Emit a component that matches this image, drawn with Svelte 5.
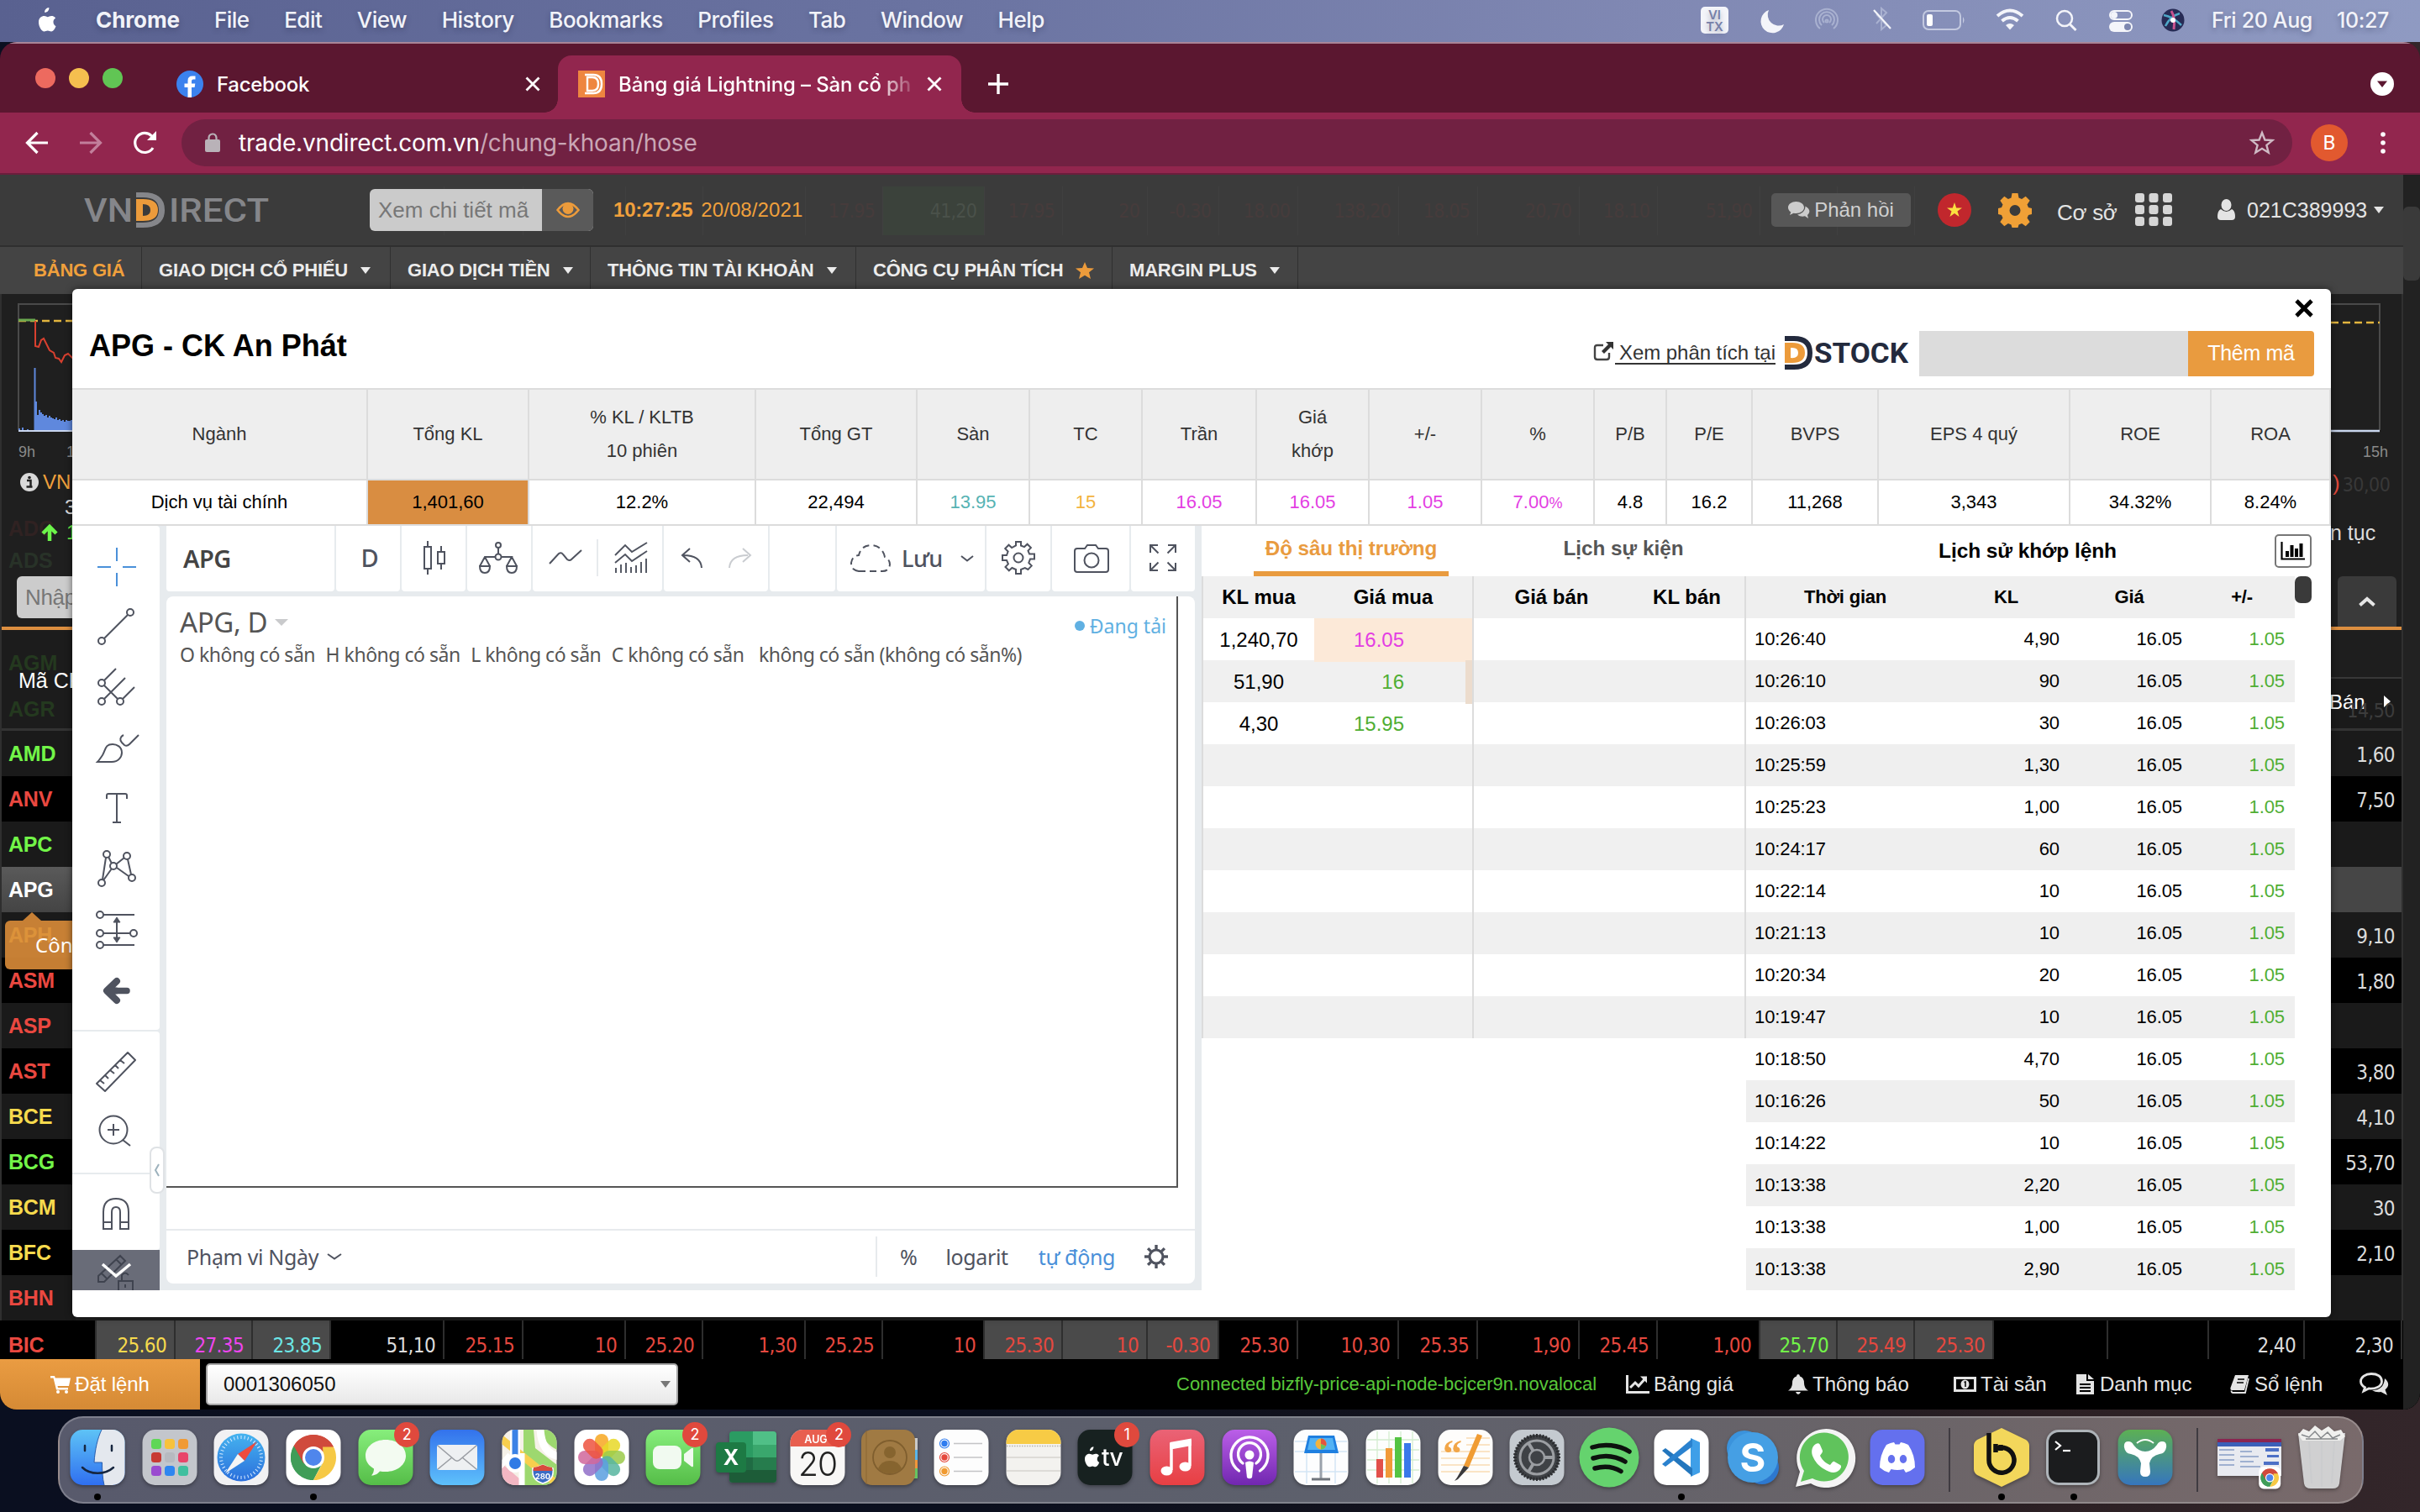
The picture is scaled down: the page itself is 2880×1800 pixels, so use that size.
<script>
  const menus = ['File', 'Edit', 'View', 'History', 'Bookmarks', 'Profiles', 'Tab', 'Window', 'Help'];

  const nav = [
    { label: 'BẢNG GIÁ', active: true },
    { label: 'GIAO DỊCH CỔ PHIẾU', caret: true },
    { label: 'GIAO DỊCH TIỀN', caret: true },
    { label: 'THÔNG TIN TÀI KHOẢN', caret: true },
    { label: 'CÔNG CỤ PHÂN TÍCH', star: true },
    { label: 'MARGIN PLUS', caret: true }
  ];

  const board = [
    ['AMD', 'gain', '1,60'], ['ANV', 'down', '7,50'], ['APC', 'gain', ''], ['APG', 'sel', ''],
    ['APH', 'ref', '9,10'], ['ASM', 'down', '1,80'], ['ASP', 'down', ''], ['AST', 'down', '3,80'],
    ['BCE', 'ref', '4,10'], ['BCG', 'gain', '53,70'], ['BCM', 'ref', '30'], ['BFC', 'ref', '2,10'],
    ['BHN', 'down', '']
  ];

  const bic = [
    ['25.60', 'ref', 1], ['27.35', 'ceil', 1], ['23.85', 'floor', 1], ['51,10', 'plain', 0], ['25.15', 'down', 0],
    ['10', 'down', 0], ['25.20', 'down', 0], ['1,30', 'down', 0], ['25.25', 'down', 0], ['10', 'down', 0],
    ['25.30', 'down', 1], ['10', 'down', 1], ['-0.30', 'down', 1], ['25.30', 'down', 0], ['10,30', 'down', 0],
    ['25.35', 'down', 0], ['1,90', 'down', 0], ['25.45', 'down', 0], ['1,00', 'down', 0], ['25.70', 'gain', 1],
    ['25.49', 'down', 1], ['25.30', 'down', 1], ['', 'plain', 0], ['', 'plain', 0], ['2,40', 'plain', 0], ['2,30', 'plain', 0]
  ];

  const ghosts = ['', '', '', '', '', '', '', '', '17.95', '41,20', '17.95', '20', '-0.30', '18.00', '138,20', '18.05', '20,70', '18.10', '51,90', '', '', '', '', '', '', ''];

  const stats = [
    ['Ngành', 'Dịch vụ tài chính', ''], ['Tổng KL', '1,401,60', 'hot'], ['% KL / KLTB|10 phiên', '12.2%', ''],
    ['Tổng GT', '22,494', ''], ['Sàn', '13.95', 'teal'], ['TC', '15', 'amber'], ['Trần', '16.05', 'pink'],
    ['Giá|khớp', '16.05', 'pink'], ['+/-', '1.05', 'pink'], ['%', '7.00', 'pink'], ['P/B', '4.8', ''],
    ['P/E', '16.2', ''], ['BVPS', '11,268', ''], ['EPS 4 quý', '3,343', ''], ['ROE', '34.32%', ''], ['ROA', '8.24%', '']
  ];

  const depth = [
    ['1,240,70', '16.05', 'pink', 'full'], ['51,90', '16', 'green', 'thin'], ['4,30', '15.95', 'green', ''],
    ...Array.from({ length: 7 }, () => ['', '', '', ''])
  ];

  const trades = [
    ['10:26:40', '4,90'], ['10:26:10', '90'], ['10:26:03', '30'], ['10:25:59', '1,30'], ['10:25:23', '1,00'],
    ['10:24:17', '60'], ['10:22:14', '10'], ['10:21:13', '10'], ['10:20:34', '20'], ['10:19:47', '10'],
    ['10:18:50', '4,70'], ['10:16:26', '50'], ['10:14:22', '10'], ['10:13:38', '2,20'], ['10:13:38', '1,00'], ['10:13:38', '2,90']
  ];

  const ticks = Array.from({ length: 44 }, (_, i) => i * (360 / 44));
  const rays = Array.from({ length: 36 }, (_, i) => i * 10);
  const petals = ['#f7a823', '#e8d829', '#9ccb4b', '#58b6a0', '#5b9fe0', '#9170c8', '#d0689c', '#ee5440'];
  const launch = ['#5fd757', '#f7c23c', '#f09a35', '#c83a32', '#b7bac0', '#e8456a', '#9a4bd0', '#2f86f0', '#3fbf9f'];
  const volume = [2, 0, 3, 0, 0, 1, 0, 0, 0, 0, 34, 18, 24, 21, 19, 17, 18, 15, 17, 15, 14, 13, 15, 12, 13, 11, 12, 10, 12, 11, 11, 12];

  const dock = [
    ['finder', 0, true], ['launchpad'], ['safari'], ['chrome', 0, true], ['messages', 2], ['mail'], ['maps'], ['photos'],
    ['facetime', 2], ['excel'], ['calendar', 2], ['contacts'], ['reminders'], ['notes'], ['tv', 1], ['music'], ['podcasts'],
    ['keynote'], ['numbers'], ['pages'], ['settings'], ['spotify'], ['vscode', 0, true], ['skype'], ['whatsapp'], ['discord'],
    ['sep'], ['bee', 0, true], ['terminal', 0, true], ['yw'], ['sep'], ['window'], ['trash']
  ];
</script>

{#snippet tile(fill)}
  <rect x="0.5" y="0" width="65" height="66" rx="15" {fill} />
{/snippet}

{#snippet apple()}
  <path d="M17 8.2c1.5-1.8 1.4-3.5 1.3-4.200-1.400.1-3 .9-3.900 2-.9 1-1.400 2.300-1.300 3.700 1.500.1 2.900-.5 3.900-1.500zM23.500 21.300c-.1-3.100 2.600-4.700 2.700-4.700-1.500-2.200-3.800-2.500-4.600-2.500-2-.2-3.800 1.100-4.800 1.100s-2.500-1.100-4.100-1.100C9.500 14.200 6 16 6 21.500c0 5.200 3.700 11 6.600 11 1.600 0 2.200-1 4.200-1s2.500 1 4.200 1c2.700 0 5-4.500 5.500-6.500-.1 0-3-1.200-3-4.700z" fill="#fff" />
{/snippet}

{#snippet chromeMark()}
  <circle cx="33" cy="33" r="27" fill="#fff" />
  <path d="M33 33L9.600 19.500A27 27 0 0 1 56.400 19.500z" fill="#d04a3c" />
  <path d="M9.600 19.500A27 27 0 0 0 33 60L44 39 33 33z" fill="#3f9d58" />
  <path d="M56.400 19.500A27 27 0 0 1 33 60L45 38 44 20z" fill="#f6c945" />
  <path d="M9.600 19.500L21 40 33 33 33 20.500H57L56.400 19.500A27 27 0 0 0 9.600 19.500z" fill="#d04a3c" />
  <path d="M9.600 19.500L21 40 33 46 27 59.300A27 27 0 0 1 9.600 19.500z" fill="#3f9d58" />
  <circle cx="33" cy="33" r="13" fill="#fff" />
  <circle cx="33" cy="33" r="10" fill="#4f86ec" />
{/snippet}

{#snippet dockIcon(name)}
  {#if name === 'finder'}
    {@render tile('url(#gFinder)')}
    <path d="M38 0h13a15 15 0 0 1 14.500 15v36a15 15 0 0 1-15 15H41c-2-8-2.500-18-2.500-27H29C30 24 33 10 38 0z" fill="#e4e8ee" />
    <path d="M38 0C33 10 30 24 29 39h9.500c0 9 .5 19 2.500 27" fill="none" stroke="#2a5fae" stroke-width="1" />
    <path d="M18 19v6M50 19v6M15 45c9 9 27 9 37 0" stroke="#16263f" stroke-width="2.500" fill="none" stroke-linecap="round" />
  {:else if name === 'launchpad'}
    {@render tile('#c3c6cc')}
    {#each launch as c, i}<rect x={11 + (i % 3) * 16} y={11 + Math.floor(i / 3) * 16} width="12" height="12" rx="3.500" fill={c} />{/each}
  {:else if name === 'safari'}
    {@render tile('#f1f1f3')}
    <circle cx="33" cy="33" r="28.500" fill="url(#gSafari)" />
    {#each rays as a}<path d="M33 7v4" stroke="#d8ecff" stroke-width="1" transform="rotate({a} 33 33)" />{/each}
    <path d="M52 14L29 29l8 8z" fill="#ed4b3d" /><path d="M14 52L37 37l-8-8z" fill="#f5f5f5" />
  {:else if name === 'chrome'}
    {@render tile('#fff')}{@render chromeMark()}
  {:else if name === 'messages'}
    {@render tile('url(#gGreen)')}
    <path d="M33 12c-14 0-24 8.500-24 19 0 7 4 12 10 15.500 0 3-1 6-3 8 5 0 8-2.500 10-5 2.200.4 4.500.6 7 .6 14 0 24-8.500 24-19S47 12 33 12z" fill="#f3fbf1" />
  {:else if name === 'mail'}
    {@render tile('url(#gMail)')}
    <rect x="9" y="18" width="48" height="30" rx="3" fill="#eef0f2" /><path d="M10 19l20 17q3 2.500 6 0l20-17M10 47l17-14M56 47L39 33" fill="none" stroke="#9a9da3" stroke-width="1.600" />
  {:else if name === 'maps'}
    <g clip-path="url(#cTile)">
      <rect width="66" height="66" fill="#f5f1e8" /><path d="M0 40L30 66H0z" fill="#f3b7c3" />
      <path d="M26 0h12l2 22 26 20V24Q50 16 46 0h20v66H26z" fill="#9dd86f" /><path d="M46 0q2 30 24 32" fill="none" stroke="#fff" stroke-width="9" />
      <path d="M-4 8l74 60" stroke="#f7cf4e" stroke-width="9" /><path d="M-2 44l12-14M24 66V28" stroke="#fff" stroke-width="7" />
      <path d="M16 0v38" stroke="#fff" stroke-width="12" /><path d="M16 0v38" stroke="#3b82e6" stroke-width="7" />
      <circle cx="16" cy="40" r="11" fill="#fff" /><circle cx="16" cy="40" r="7" fill="#2f7ae5" />
      <path d="M37 46q6-1 12-4 6 3 12 4 2 14-12 18-14-4-12-18z" fill="#3b6cc4" stroke="#fff" stroke-width="1.500" />
      <path d="M38 45q5-.5 11-3.500 6 3 11 3.500l.5 4h-23z" fill="#d84a3d" />
      <text x="49" y="59" font-size="9.500" fill="#fff" text-anchor="middle" font-weight="700">280</text>
    </g>
  {:else if name === 'photos'}
    {@render tile('#fff')}
    {#each petals as c, i}<rect x="25" y="5" width="16" height="27" rx="8" fill={c} opacity="0.86" transform="rotate({i * 45} 33 33)" />{/each}
  {:else if name === 'facetime'}
    {@render tile('url(#gGreen)')}
    <rect x="9" y="19" width="34" height="28" rx="8" fill="#f1faf0" /><path d="M46 29l9-7q2-1 2 1v20q0 2-2 1l-9-7z" fill="#f1faf0" />
  {:else if name === 'excel'}
    <rect x="14" y="2" width="56" height="61" rx="4" fill="#2b9b62" /><path d="M42 2h24q4 0 4 4v12H42z" fill="#50bf87" /><path d="M42 18h28v15H42z" fill="#3aa76d" />
    <path d="M14 33h28v15H14z" fill="#1f6b43" /><path d="M42 33h28v15H42z" fill="#267c4d" /><path d="M14 48h56v11q0 4-4 4H18q-4 0-4-4z" fill="#1d5c38" />
    <rect x="-2" y="15" width="36" height="36" rx="4" fill="#1d7a44" /><text x="16" y="42" font-size="25" font-weight="700" fill="#fff" text-anchor="middle">X</text>
  {:else if name === 'calendar'}
    {@render tile('#f8f7f6')}
    <path d="M.5 20V15A15 15 0 0 1 15.500 0h35a15 15 0 0 1 15 15v5z" fill="#e85f4f" />
    <text x="31" y="15.500" font-size="12.500" font-weight="600" fill="#fff" text-anchor="middle">AUG</text>
    <text x="33" y="55" font-size="39" font-weight="300" fill="#222" text-anchor="middle" letter-spacing="-1">20</text>
  {:else if name === 'contacts'}
    <path d="M62 10h5v14h-5z" fill="#c9c9c9" /><path d="M62 24h5v12h-5z" fill="#58b5ea" /><path d="M62 36h5v10h-5z" fill="#f0963b" /><path d="M62 46h5v12h-5z" fill="#67c462" />
    <rect x="0" y="0" width="64" height="66" rx="13" fill="#a07a43" /><path d="M6 1v64" stroke="#8a6734" />
    <circle cx="34" cy="33" r="20" fill="none" stroke="#7f5e2e" stroke-width="1.800" /><circle cx="34" cy="27" r="7" fill="#86642f" /><path d="M20 46q4-9 14-9t14 9q-5 6-14 6t-14-6z" fill="#86642f" />
  {:else if name === 'reminders'}
    {@render tile('#fdfdfd')}
    {#each ['#2f7cf0', '#e5483c', '#f09a30'] as c, i}
      <circle cx="13" cy={16.500 + i * 16.500} r="5.500" fill="none" stroke={c} stroke-width="1.200" /><circle cx="13" cy={16.500 + i * 16.500} r="3.700" fill={c} /><path d="M24 {16.500 + i * 16.500}h34" stroke="#c4c4c6" stroke-width="1.500" />
    {/each}
  {:else if name === 'notes'}
    {@render tile('#f3f2ef')}
    <path d="M.5 17V15A15 15 0 0 1 15.500 0h35a15 15 0 0 1 15 15v2z" fill="#f7cb45" /><path d="M1 19.500h64" stroke="#b9b6ae" stroke-width="1.500" stroke-dasharray="1.500 1.500" /><path d="M1 33h64M1 49h64" stroke="#d6d4cf" stroke-width="1.300" />
  {:else if name === 'tv'}
    {@render tile('#172120')}
    <g transform="translate(4 17) scale(.84)">{@render apple()}</g><text x="29" y="43" font-size="28" font-weight="500" fill="#fff" letter-spacing="-.5">tv</text>
  {:else if name === 'music'}
    {@render tile('url(#gMusic)')}
    <path d="M26 16v32M48 12v31" fill="none" stroke="#fff" stroke-width="3.500" /><path d="M24.300 15l25.500-4.500v8.500l-25.500 4.700z" fill="#fff" /><ellipse cx="20.500" cy="49" rx="7" ry="5.500" fill="#fff" /><ellipse cx="42.500" cy="44" rx="7" ry="5.500" fill="#fff" />
  {:else if name === 'podcasts'}
    {@render tile('url(#gPod)')}
    <path d="M20.500 49a22 22 0 1 1 25 0M25 40a13.500 13.500 0 1 1 16 0" fill="none" stroke="#fff" stroke-width="3.300" stroke-linecap="round" /><circle cx="33" cy="30" r="5.500" fill="#fff" /><path d="M28 39q5-3 10 0l-2 18q-3 2.500-6 0z" fill="#fff" />
  {:else if name === 'keynote'}
    {@render tile('#fdfdfe')}
    <path d="M2 14h62M2 26h62M2 50h62M16 26v38M50 26v38" stroke="#d3e5f5" stroke-width="1.500" /><path d="M33 27v32" stroke="#9aa1ab" stroke-width="3" /><path d="M22 59h22" stroke="#70757c" stroke-width="3" /><path d="M18 7h31l5 21H13z" fill="#1f7fe0" /><path d="M20 10h27l3 14H17z" fill="#53b2f4" /><circle cx="33" cy="17" r="6.500" fill="#f3b33e" /><path d="M33 17v-6.500a6.500 6.500 0 0 1 6 9z" fill="#e4543e" /><path d="M33 17l6 2.500a6.500 6.500 0 0 1-6 4z" fill="#6cc25a" />
  {:else if name === 'numbers'}
    {@render tile('#fdfefd')}
    <path d="M2 12h62M2 24h62M2 36h62M2 48h62M14 2v62M28 2v62M42 2v62M56 2v62" stroke="#d4edd0" stroke-width="1.300" /><path d="M13 35h8v22h-8z" fill="#e2504a" /><path d="M24 22h8v35h-8z" fill="#f19a38" /><path d="M35 9h8v48h-8z" fill="#55c443" /><path d="M46 16h8v41h-8z" fill="#3a78ea" />
  {:else if name === 'pages'}
    {@render tile('#fefdfb')}
    <path d="M4 26h58M4 34h58M4 42h58M4 50h58M34 10h28M34 18h28" stroke="#f9dcb4" stroke-width="1.500" /><text x="6" y="44" font-size="46" font-weight="700" fill="#f2a648" class="serif">“</text>
    <path d="M47 5l6 2-16 38-6-2z" fill="#f09c33" /><path d="M37 45l-6-2-8 14-3 4 4-2z" fill="#3a3a3c" />
  {:else if name === 'settings'}
    {@render tile('#c4cad0')}
    <circle cx="33" cy="33" r="27" fill="#3f4246" />{#each ticks as a}<path d="M33 5v4" stroke="#2b2d30" stroke-width="2" transform="rotate({a} 33 33)" />{/each}
    <circle cx="33" cy="33" r="20" fill="none" stroke="#9b9ea2" stroke-width="3" /><circle cx="33" cy="33" r="9" fill="none" stroke="#9b9ea2" stroke-width="2.500" /><path d="M42 33h11M28.500 25L23 16M28.500 41L23 50" stroke="#9b9ea2" stroke-width="4" />
  {:else if name === 'spotify'}
    <circle cx="33" cy="33" r="35.500" fill="#65d36e" /><path d="M13 21c14-4.500 31-3 44 5M14 34c13-4 27-2.500 38 4M16 46c11-3 22-2 31 3.500" fill="none" stroke="#0d120e" stroke-width="5.500" stroke-linecap="round" />
  {:else if name === 'vscode'}
    {@render tile('#fff')}
    <path d="M44 10l11 5v36l-11 5z" fill="#3f9fe8" /><path d="M10 25l4-3 32 24v9.500z" fill="#2376bd" /><path d="M10 41l4 3 32-24v-9.500z" fill="#2a82cf" />
  {:else if name === 'skype'}
    <circle cx="23" cy="22" r="21" fill="#3b93dc" /><circle cx="44" cy="45" r="20" fill="#2d78cf" /><circle cx="33" cy="33" r="30" fill="#459fe4" /><text x="33" y="50" font-size="47" font-weight="700" fill="#fff" text-anchor="middle">S</text>
  {:else if name === 'whatsapp'}
    <path d="M-2 68l5-18A35 35 0 1 1 16 64z" fill="#f4f4f4" /><path d="M4 62l4-13a29 29 0 1 1 10 9z" fill="#60c35c" /><path d="M22 17c2-1 4-1 5 1l3 7c.5 2-2 4-3 6 3 6 7 9 12 11 2-2 3-5 5-4l7 4c2 1 1 4-1 6-5 5-12 3-18-1-7-4-11-9-14-16-2-6 0-12 4-14z" fill="#fff" />
  {:else if name === 'discord'}
    {@render tile('#6470ee')}
    <path d="M20 18q5-2.500 9-3l1.500 2.500h5L37 15q4 .5 9 3 8 12 8 27-5 4.500-11 6l-2.500-4q-7.500 2-15 0L23 51q-6-1.500-11-6 0-15 8-27z" fill="#fff" /><ellipse cx="26" cy="35" rx="4.200" ry="5" fill="#6470ee" /><ellipse cx="40" cy="35" rx="4.200" ry="5" fill="#6470ee" />
  {:else if name === 'bee'}
    <path d="M33-2L62 12q4 3 4 7v28q0 4-4 7L33 68 4 54q-4-3-4-7V19q0-4 4-7z" fill="#f3d75b" /><path d="M18 4v32a15 15 0 1 0 8-13M26 17v10M32 18v7" fill="none" stroke="#111" stroke-width="5.500" />
  {:else if name === 'terminal'}
    <rect x="1" y="0" width="64" height="66" rx="15" fill="#aeb4b9" /><rect x="4" y="3" width="58" height="60" rx="12" fill="#1b1c1e" /><path d="M12 14l6 5-6 5" fill="none" stroke="#fff" stroke-width="2.200" /><path d="M21 25h9" stroke="#fff" stroke-width="2.200" />
  {:else if name === 'yw'}
    {@render tile('url(#gYw)')}
    <path d="M8 21q-1-7 5-7 4 0 6 4 6 8 14 8t14-8q2-4 6-4 6 0 5 7-1 7-8 8-10 2-12 11l1 10q0 6-6 6t-6-6l1-10q-2-9-12-11-7-1-8-8z" fill="#fff" /><path d="M23 16q10-8 20 0" fill="none" stroke="#fff" stroke-width="2" />
  {:else if name === 'window'}
    <rect x="-5" y="11" width="76" height="44" fill="#e8eaf0" /><path d="M-5 11h76v4H-5z" fill="#8a2550" /><path d="M-5 15h76v5H-5z" fill="#3b5fb8" /><path d="M-3 24h18M-3 30h18M-3 36h18M-3 42h18M22 26h14M22 32h22M22 38h16M22 44h24" stroke="#9fb0d0" stroke-width="2" /><path d="M52 22h16v4H52zM54 30h14v3H54zM50 38h18v4H50z" fill="#4d70c6" />
    <g transform="translate(44 44) scale(.4)">{@render tile('#fff')}{@render chromeMark()}</g>
  {:else if name === 'trash'}
    <path d="M5 4h56l-7 60q-1 6-8 6H20q-7 0-8-6z" fill="#d9dadb" opacity=".93" /><path d="M18 14l3 50M33 14v54M48 14l-3 50" stroke="#cbccce" stroke-width="2" />
    <path d="M5 6l6-7 7 3 7-7 8 6 8-5 7 6 8-2 5 8-6 5H10z" fill="#f0f0ee" /><path d="M9 6l9 3 7-7 7 8 8-7 6 7 9-4M14 11h38" stroke="#85888b" stroke-width="1.500" fill="none" />
  {/if}
{/snippet}

{#snippet gear(cx, cy, s)}
  <g transform="translate({cx} {cy}) scale({s})">
    <path d="M-3-19h6v4.500l4 1.600 3.600-3.400 4.300 4.300-3.400 3.600 1.600 4H19v6h-5l-1.700 4.400 3.400 3.600-4.300 4.300L7.800 12 3 14v5h-6v-5l-4.600-2-3.600 3.300-4.300-4.300 3.400-3.600L-14 3h-5v-6h5l1.600-4.400-3.400-3.600 4.300-4.300 3.600 3.400L-3-14.500z" />
    <circle r="5.500" />
  </g>
{/snippet}

<svg class="defs" width="0" height="0">
  <defs>
    <linearGradient id="gFinder" x2="0" y2="1"><stop stop-color="#5ec3f6" /><stop offset="1" stop-color="#2f6ff0" /></linearGradient>
    <linearGradient id="gSafari" x2="0" y2="1"><stop stop-color="#45b3ef" /><stop offset="1" stop-color="#2b6fdc" /></linearGradient>
    <linearGradient id="gGreen" x2="0" y2="1"><stop stop-color="#87ee7c" /><stop offset="1" stop-color="#55bd48" /></linearGradient>
    <linearGradient id="gMail" x2="0" y2="1"><stop stop-color="#3372ec" /><stop offset="1" stop-color="#5ec1fb" /></linearGradient>
    <linearGradient id="gMusic" x2="0" y2="1"><stop stop-color="#ea6376" /><stop offset="1" stop-color="#e83f43" /></linearGradient>
    <linearGradient id="gPod" x2="0" y2="1"><stop stop-color="#bb5fe8" /><stop offset="1" stop-color="#7127b0" /></linearGradient>
    <linearGradient id="gYw" x2="0" y2="1"><stop stop-color="#5cb054" /><stop offset="1" stop-color="#3676bd" /></linearGradient>
    <clipPath id="cTile"><rect x="0.500" width="65" height="66" rx="15" /></clipPath>
  </defs>
</svg>

<div class="desktop">
  <header class="menubar">
    <svg class="apple" viewBox="0 0 34 38">{@render apple()}</svg>
    <b>Chrome</b>
    {#each menus as m}<span>{m}</span>{/each}
    <div class="tray">
      <svg width="836" height="48" viewBox="2020 0 836 48">
        <g fill="#f4f5fa">
          <rect x="2024" y="8" width="33" height="32" rx="5" />
          <path d="M2105 12a14 14 0 1 0 18 17 13 13 0 0 1-18-17z" />
        </g>
        <text x="2040.500" y="22.500" font-size="15" font-weight="600" fill="#7680a8" text-anchor="middle">VI</text>
        <text x="2040.500" y="36.500" font-size="15" font-weight="600" fill="#7680a8" text-anchor="middle">TX</text>
        <g fill="none" stroke="#a9b1d0" stroke-width="2"><path d="M2166 34a13 13 0 1 1 16 0M2168 30a9 9 0 1 1 12 0M2171 27a5 5 0 1 1 6 0" /><circle cx="2174" cy="25" r="1.500" /><path d="M2233 17l12 13-6 5V10l6 5-12 13" /></g>
        <path d="M2230 12l20 22" stroke="#f4f5fa" stroke-width="2.200" />
        <rect x="2289" y="13" width="44" height="22" rx="6" fill="none" stroke="#c3c9e0" stroke-width="2" /><path d="M2336 20q3 4 0 8z" fill="#c3c9e0" /><rect x="2293" y="17" width="7" height="14" rx="2" fill="#fff" />
        <g fill="none" stroke="#f4f5fa" stroke-width="4"><path d="M2377 19q15-13 30 0M2382.500 25q9.500-8 19 0" /></g><path d="M2387 30q5-4 10 0l-5 5.500z" fill="#f4f5fa" />
        <circle cx="2457" cy="22" r="9" fill="none" stroke="#f4f5fa" stroke-width="2.500" /><path d="M2463.500 29l7 7" stroke="#f4f5fa" stroke-width="3" />
        <rect x="2511" y="13" width="26" height="10" rx="5" fill="none" stroke="#f4f5fa" stroke-width="2" /><circle cx="2516" cy="18" r="4" fill="#f4f5fa" /><rect x="2510" y="26" width="28" height="12" rx="6" fill="#f4f5fa" /><circle cx="2532" cy="32" r="4" fill="#7d87b0" />
        <circle cx="2586" cy="24" r="13.500" fill="#272b55" /><path d="M2575 18q11 2 21 12M2577 31q6-12 17-15" stroke="#4fa8c8" stroke-width="2.500" fill="none" /><path d="M2584 13q5 8 3 22" stroke="#c9538f" stroke-width="3" fill="none" /><circle cx="2586" cy="24" r="3" fill="#fff" />
      </svg>
    </div>
    <span class="date">Fri 20 Aug<i></i>10:27</span>
  </header>

  <main class="browser">
    <div class="tabs">
      <div class="lights"><i></i><i></i><i></i></div>
      <div class="tab">
        <svg width="32" height="32" viewBox="0 0 32 32"><circle cx="16" cy="16" r="16" fill="#3b82ee" /><path d="M13.500 32V20H9.500v-4.500h4V12q0-5.500 5.500-5.500h3.500v4h-2.500q-2 0-2 2v3h4.300L21.600 20H18v12z" fill="#fff" /></svg>
        <span class="title">Facebook</span>
        <svg class="x" width="18" height="18" viewBox="0 0 18 18"><path d="M1.500 1.500l15 15M16.500 1.500l-15 15" stroke="#fff" stroke-width="2.800" /></svg>
      </div>
      <div class="tab active">
        <svg width="32" height="32" viewBox="0 0 32 32"><rect width="32" height="32" fill="#ee8640" /><path d="M11 8h6q7 0 7 8t-7 8h-6zM8 5h10q10 0 10 11T18 27H8" fill="none" stroke="#fff" stroke-width="2.400" /></svg>
        <span class="title fade">Bảng giá Lightning – Sàn cổ ph</span>
        <svg class="x" width="18" height="18" viewBox="0 0 18 18"><path d="M1.500 1.500l15 15M16.500 1.500l-15 15" stroke="#fff" stroke-width="2.800" /></svg>
      </div>
      <svg class="plus" width="24" height="24" viewBox="0 0 24 24"><path d="M12 0v24M0 12h24" stroke="#fff" stroke-width="3.400" /></svg>
      <svg class="drop" width="28" height="28" viewBox="0 0 28 28"><circle cx="14" cy="14" r="14" fill="#fff" /><path d="M8 10.500h12l-6 7.500z" fill="#5b1730" /></svg>
    </div>

    <div class="toolbar">
      <svg width="190" height="72" viewBox="0 0 190 72" fill="none" stroke="#fff" stroke-width="3.200">
        <path d="M57 36H33M44.500 24L32.500 36l12 12" /><path d="M95 36h24M107.500 24l12 12-12 12" stroke="#c27f9b" />
        <path d="M182 42a11.500 11.500 0 1 1-1.500-14" /><path d="M186 22v11h-11z" fill="#fff" stroke="none" />
      </svg>
      <div class="omni">
        <svg width="18" height="24" viewBox="0 0 18 24"><rect y="8" width="18" height="15" rx="2" fill="#b9b2b8" /><path d="M4.500 9V6a4.500 4.500 0 0 1 9 0v3" fill="none" stroke="#b9b2b8" stroke-width="2.200" /></svg>
        <span class="url">trade.vndirect.com.vn<em>/chung-khoan/hose</em></span>
        <svg class="fav" width="30" height="30" viewBox="0 0 30 30"><path d="M15 3l3.400 8.500 9 .6-7 5.800 2.300 8.800L15 21.800l-7.700 4.900 2.300-8.800-7-5.800 9-.6z" fill="none" stroke="#cfbac4" stroke-width="2.400" /></svg>
      </div>
      <div class="avatar">B</div>
      <svg class="dots" width="6" height="28" viewBox="0 0 6 28" fill="#fff"><circle cx="3" cy="4" r="2.800" /><circle cx="3" cy="14" r="2.800" /><circle cx="3" cy="24" r="2.800" /></svg>
    </div>

    <div class="page">
      <div class="sitehead">
        <div class="ghostrow cols"><span></span>{#each ghosts as g, i}<span class:lit={i === 9}>{g}</span>{/each}</div>
        <svg class="brand" width="222" height="48" viewBox="100 226 222 48">
          <text x="100" y="264" font-size="38" fill="#85868a" textLength="58" lengthAdjust="spacingAndGlyphs">VN</text>
          <path d="M162 229h8q26 0 26 21t-26 21h-8v-6h8q19 0 19-15t-19-15h-8z" fill="#85868a" />
          <path d="M162 237h8q18 0 18 13t-18 13h-8zm8 6v14q9 0 9-7t-9-7z" fill="#ec9b3b" fill-rule="evenodd" />
          <text x="201" y="264" font-size="38" fill="#85868a" textLength="119" lengthAdjust="spacingAndGlyphs">IRECT</text>
        </svg>
        <div class="search"><span>Xem chi tiết mã</span>
          <div class="eye"><svg width="28" height="20" viewBox="0 0 28 20"><path d="M1.500 10Q14-6 26.500 10 14 26 1.500 10z" fill="none" stroke="#ec9b3b" stroke-width="2.500" /><circle cx="14" cy="8.500" r="6.500" fill="#ec9b3b" /></svg></div>
        </div>
        <div class="clock"><b>10:27:25</b> 20/08/2021</div>
        <div class="feedback">
          <svg width="26" height="22" viewBox="0 0 26 22" fill="#ccc"><path d="M9.500 1C4.300 1 0 4 0 8c0 2.300 1.300 4.200 3.300 5.500L2 17l4.500-2.300c1 .2 2 .3 3 .3 5.200 0 9.500-3 9.500-7s-4.300-7-9.500-7z" /><path d="M20.500 6.500c.2 5.500-4.500 9.500-9.500 10 3 2.500 6.500 2.500 9 1.800L24 21l-1-4c3-2.500 4-7-2.500-10.500z" /></svg>
          Phản hồi
        </div>
        <svg class="flag" width="40" height="40" viewBox="0 0 40 40"><circle cx="20" cy="20" r="20" fill="#c1272d" /><path d="M20 11l2.200 6.500h6.800l-5.500 4 2.100 6.500-5.600-4-5.600 4 2.100-6.500-5.500-4h6.800z" fill="#fbe040" /></svg>
        <svg class="cog" width="42" height="42" viewBox="0 0 42 42" fill="#f0a036"><path fill-rule="evenodd" d="M17.500 1h7l1 5.500 3.600 1.500 4.600-3.200 5 5-3.200 4.600 1.500 3.600 4 1v7l-4 1-1.500 3.600 3.200 4.600-5 5-4.600-3.200-3.600 1.500-1 3.500h-7l-1-3.500-3.600-1.500-4.600 3.200-5-5L6.500 30.600 5 27l-4-1v-7l4-1 1.500-3.600L3.300 9.800l5-5L12.900 8l3.600-1.500zM21 15a6.500 6.500 0 1 0 0 13 6.500 6.500 0 0 0 0-13z" /></svg>
        <span class="base">Cơ sở</span>
        <svg class="apps" width="45" height="40" viewBox="0 0 45 40" fill="#d6d6d6">{#each [0, 1, 2] as r}{#each [0, 1, 2] as c}<rect x={c * 16.500} y={r * 14} width="11" height="11" rx="3" />{/each}{/each}</svg>
        <svg class="user" width="21" height="26" viewBox="0 0 21 26" fill="#e4e4e4"><ellipse cx="10.500" cy="7" rx="6" ry="7" /><path d="M4 12q6.500 6 13 0 4 2 4 9 0 4-4 4H4q-4 0-4-4 0-7 4-9z" /></svg>
        <span class="acct">021C389993</span><i class="caret"></i>
      </div>

      <nav class="sitenav">
        {#each nav as n}
          <div class:active={n.active}>{n.label}
            {#if n.caret}<i class="caret"></i>{/if}
            {#if n.star}<svg width="22" height="20" viewBox="0 0 22 20"><path d="M11 0l3 7 8 .5-6 4.800 2 7.700-7-4.300L4 20l2-7.700L0 7.500 8 7z" fill="#ec9b3b" /></svg>{/if}
          </div>
        {/each}
      </nav>

      <div class="boardArea">
        <section class="side left">
          <svg class="mini" width="90" height="210" viewBox="0 350 90 210">
            <path d="M90 362H22V512" fill="none" stroke="#4a4a4a" stroke-width="2" />
            <path d="M22 382h68" stroke="#e2b53e" stroke-width="2.500" stroke-dasharray="9 5" /><path d="M22 381h20" stroke="#6aa84f" stroke-width="3" />
            <path d="M42 382v30l4 1 3-8 3-2 4 8 3 6 5 3 2 6 4 1 3 4 4-8 4-2 5 5 4-1" fill="none" stroke="#d8402f" stroke-width="2" />
            {#each volume as v, i}<rect x={22 + i * 2} y={512 - v} width="2" height={v} fill="#5f88dd" />{/each}
            <path d="M41.500 438v74" stroke="#5f88dd" stroke-width="2" /><path d="M22 513h68" stroke="#c9d6ee" stroke-width="2" />
            <text x="22" y="544" font-size="18" fill="#8a8a8a">9h</text><text x="79" y="544" font-size="18" fill="#8a8a8a">1</text>
          </svg>
          <div class="idx"><svg width="22" height="22" viewBox="0 0 22 22"><circle cx="11" cy="11" r="11" fill="#d9d9d9" /><path d="M8 9h4.500v7M7.500 16.500h7" stroke="#222" stroke-width="2.500" fill="none" /><circle cx="11" cy="5.500" r="1.800" fill="#222" /></svg><span>VN</span></div>
          <div class="idx2">3</div>
          <div class="idx3"><em>ADC</em><svg width="22" height="22" viewBox="0 0 22 22"><path d="M11 21V4M3 12l8-8 8 8" fill="none" stroke="#6cf54a" stroke-width="4.500" /></svg>1</div>
          <div class="ghostcode">ADS</div>
          <div class="entry">Nhập</div>
          <div class="rule"></div>
          <div class="codehead"><em>AGM</em><span>Mã CK</span><em>AGR</em></div>
          {#each board as [code, tone]}<div class="brow {tone}">{code}</div>{/each}
        </section>
        <section class="side right">
          <svg class="mini" width="85" height="210" viewBox="2774 350 85 210"><path d="M2774 362h58v150" fill="none" stroke="#4a4a4a" stroke-width="2" /><path d="M2774 384h58" stroke="#e2b53e" stroke-width="2.500" stroke-dasharray="9 5" /><path d="M2774 513h58" stroke="#c9d6ee" stroke-width="2.500" /><text x="2812" y="544" font-size="18" fill="#8a8a8a">15h</text></svg>
          <div class="pct">)<em>30,00</em></div>
          <div class="state">n tục</div>
          <div class="collapse"><svg width="20" height="12" viewBox="0 0 20 12"><path d="M1.500 10.500L10 3l8.500 7.500" fill="none" stroke="#e6e6e6" stroke-width="4" /></svg></div>
          <div class="rule"></div>
          <div class="rh1"></div>
          <div class="rh2">Bán<i></i><em>14,50</em></div>
          {#each board as [code, tone, v]}<div class="brow r {tone}">{v}</div>{/each}
        </section>
      </div>

      <div class="bic cols">
        <span class="name">BIC</span>
        {#each bic as [v, tone, lit]}<span class="{tone} {lit ? 'lit' : ''}">{v}</span>{/each}
      </div>

      <footer class="foot">
        <div class="order"><svg width="24" height="21" viewBox="0 0 24 21" fill="#fff"><path d="M0 0h5l.8 2.500H24L22 12H8.500l.5 2h12v2.500H7L3.500 2.500H0z" /><circle cx="9" cy="19" r="2" /><circle cx="19" cy="19" r="2" /></svg>Đặt lệnh</div>
        <div class="select">0001306050<i class="caret"></i></div>
        <span class="conn">Connected bizfly-price-api-node-bcjcer9n.novalocal</span>
        <div class="fl"><svg width="28" height="22" viewBox="0 0 28 22"><path d="M1.500 0v20.500H28M5 15l6-6 4 4 8-9" fill="none" stroke="#e4e4e4" stroke-width="3" /><path d="M17 1.500h8v8z" fill="#e4e4e4" /></svg>Bảng giá</div>
        <div class="fl"><svg width="24" height="24" viewBox="0 0 24 24" fill="#e4e4e4"><path d="M12 0q2 0 2 2.500 5 1.500 5 8 0 6 5 9H0q5-3 5-9 0-6.500 5-8Q10 0 12 0zM9 21h6q-1 3-3 3t-3-3z" /></svg>Thông báo</div>
        <div class="fl"><svg width="27" height="18" viewBox="0 0 27 18"><rect x="1.500" y="1.500" width="24" height="15" fill="none" stroke="#e4e4e4" stroke-width="3" /><ellipse cx="13.500" cy="9" rx="5" ry="5.500" fill="#e4e4e4" /><path d="M12.500 6.500l1.500-.5v6" stroke="#000" fill="none" stroke-width="1.500" /></svg>Tài sản</div>
        <div class="fl wide"><svg width="21" height="24" viewBox="0 0 21 24"><path d="M0 0h12v8h9v16H0zM14 0l7 6h-7z" fill="#e4e4e4" /><path d="M4 12h13M4 16h13M4 20h13" stroke="#000" stroke-width="1.800" /></svg>Danh mục</div>
        <div class="fl wide"><svg width="22" height="22" viewBox="0 0 22 22"><path d="M6 0h16l-5 18H2q-2 0-1.500-3z" fill="#e4e4e4" /><path d="M2 20h16l4-16M9 5h8M8 9h8" stroke="#000" stroke-width="1.300" fill="none" /><path d="M1.500 18.500q0 2.500 2 2.500H18l4-17" stroke="#e4e4e4" stroke-width="1.800" fill="none" /></svg>Sổ lệnh</div>
        <svg class="chat" width="36" height="28" viewBox="0 0 36 28"><path d="M14 1.500C7 1.500 1.500 5.500 1.500 10.500c0 3 2 5.500 5 7.200L5 22l6-3c7 1 15.500-2 15.500-8.500S21 1.500 14 1.500z" fill="none" stroke="#e4e4e4" stroke-width="2.800" /><path d="M30 7c6 5 5 10 .5 13.500L33 27l-7.500-4q-6 1-10.500-2 14 0 15-14z" fill="#e4e4e4" /></svg>
      </footer>
      <div class="gutter"><i></i></div>
    </div>

    <div class="tip">Côn</div>

    <div class="modal">
      <div class="mhead">
        <h1>APG - CK An Phát</h1>
        <svg class="ext" width="26" height="24" viewBox="0 0 26 24"><path d="M12 4H5q-3 0-3 3v11q0 3 3 3h11q3 0 3-3v-5" fill="none" stroke="#444" stroke-width="2.400" /><path d="M15 0h9v9l-3-3-8 8-3-3 8-8z" fill="#333" /></svg>
        <span class="link">Xem phân tích tại</span>
        <svg class="dstock" width="148" height="42" viewBox="0 0 148 42"><path d="M0 1h11q22 0 22 20T11 41H0v-6h11q16 0 16-14T11 7H0z" fill="#232a3d" /><path d="M0 9h9q15 0 15 12T9 33H0zm7 6v12q9 1 9-6t-9-6z" fill="#ec9b3b" fill-rule="evenodd" /><text x="35" y="33" font-size="33" font-weight="700" fill="#232a3d" textLength="112" lengthAdjust="spacingAndGlyphs">STOCK</text></svg>
        <div class="addbox"></div><div class="addbtn">Thêm mã</div>
        <svg class="close" width="22" height="22" viewBox="0 0 22 22"><path d="M2 2l18 18M20 2L2 20" stroke="#000" stroke-width="4.800" /></svg>
      </div>
      <div class="stats">
        {#each stats as [h, v, tone]}
          <div class="stat"><div class="sh">{#each h.split('|') as l}<span>{l}</span>{/each}</div><div class="sv {tone}">{v}{#if h === '%'}<small>%</small>{/if}</div></div>
        {/each}
      </div>

      <div class="mbody">
        <div class="chart">
          <div class="tools">
            <div class="grp g1">
              <svg viewBox="86 639 104 72" class="blue"><path d="M139 652v16M139 682v16M116 675h16M146 675h16" /></svg>
              <svg viewBox="86 711 104 72"><circle cx="121" cy="763" r="4" /><circle cx="155" cy="729" r="4" /><path d="M124 760l28-28" /></svg>
              <svg viewBox="86 783 104 72"><circle cx="121" cy="813" r="4" /><circle cx="121" cy="835" r="4" /><circle cx="143" cy="835" r="4" /><path d="M124 810l14-14M124 832l25-25M124 816l16 16M146 832l14-14" /></svg>
              <svg viewBox="86 855 104 72"><path d="M116 907h17c8 0 12-6 12-11 0-7-6-10-11-10-9 0-8 6-12 13-2 3-4 6-6 8zM147 875c-4 2-5 6-2 9l3 3q3 2 6-1l11-11" /></svg>
              <svg viewBox="86 927 104 72"><path d="M127 951v-4q0-2 2-2h20q2 0 2 2v4M139 945v34M134 979h10" /></svg>
              <svg viewBox="86 999 104 72"><circle cx="127" cy="1017" r="4" /><circle cx="151" cy="1019" r="4" /><circle cx="135" cy="1031" r="4" /><circle cx="121" cy="1051" r="4" /><circle cx="157" cy="1045" r="4" /><path d="M126 1021l-4 26M129 1020l4 8M133 1034l-10 14M138 1029l10-8M139 1033l14 10M152 1023l4 18" /></svg>
              <svg viewBox="86 1071 104 72"><circle cx="119" cy="1089" r="4" /><circle cx="119" cy="1111" r="4" /><circle cx="119" cy="1125" r="4" /><circle cx="159" cy="1111" r="4" /><path d="M123 1089h37M123 1111h32M123 1125h37M139 1096v22" /><path d="M139 1092l4 6h-8zM139 1122l4-6h-8z" fill="#4f535f" stroke-width="1" /></svg>
              <svg viewBox="86 1143 104 72"><path d="M110.500 1179.500M139 1168l-12 11.500 12 11.500M130 1179.500h8" stroke-width="8" stroke-linecap="round" stroke-linejoin="round" /><path d="M130 1179.500h7M134 1179.500h17" stroke-width="7.500" stroke-linecap="round" /></svg>
            </div>
            <div class="grp g2">
              <svg viewBox="86 1239 104 72"><path d="M152 1253l9 9-36 37-10-9zM119 1286l5 4M125 1280l4 4M131 1274l5 4M137 1268l4 4M143 1262l5 4" stroke-linejoin="round" /></svg>
              <svg viewBox="86 1311 104 72"><circle cx="135" cy="1345" r="16.500" /><path d="M146 1357l9 7M128 1345h14M135 1338v14" /></svg>
            </div>
            <div class="grp g3">
              <svg viewBox="86 1409 104 72"><path d="M123 1463v-20q0-16 15-16t15 16v20h-10v-20q0-6-5-6t-5 6v20zM123 1455h10M143 1455h10" /></svg>
            </div>
            <div class="more"><svg width="104" height="48" viewBox="86 1488 104 48"><g stroke="#3f434f"><path d="M117 1519l26-24 6 6-25 25h-7zM121 1516l6 6M138 1499l6 6M141 1525h17v12h-17zM145 1524v-6q4-5 8 0M149 1529v4" /></g><path d="M122 1505l16 14 17-14" stroke="#fff" stroke-width="3.500" /></svg></div>
            <div class="handle"><svg width="10" height="16" viewBox="0 0 10 16"><path d="M7 1L3 8l4 7" fill="none" stroke="#9db2bd" stroke-width="2" /></svg></div>
          </div>
          <div class="plot">
            <div class="ptop">
              <div class="c sym">APG</div>
              <div class="c day">D</div>
              <div class="c"><svg width="76" height="76" viewBox="478 626 76 76"><path d="M505 651h8v26h-8zM509 644v7M509 677v7M521 657h8v14h-8zM525 650v7M525 671v7" /></svg></div>
              <div class="c"><svg width="76" height="76" viewBox="556 626 76 76"><circle cx="593" cy="649" r="3" /><path d="M593 652v8" /><circle cx="593" cy="663" r="3.500" /><path d="M589 663h-12l-6 11M577 663l6 11M597 663h12l-6 11M609 663l6 11M571 674h12q0 8-6 8t-6-8zM603 674h12q0 8-6 8t-6-8z" /></svg></div>
              <div class="c"><svg width="154" height="76" viewBox="634 626 154 76"><path d="M654 671l11-12q3-2 5 1l5 6q3 2 5 0l12-11" /><path d="M711 642v44" stroke="#e7eaed" /><path d="M732 661l12-12 8 8 18-11M732 670l12-10 8 8 18-12M733 676v6M739 672v10M745 670v12M751 675v7M757 673v9M763 669v13M769 665v17" stroke-width="1.900" /></svg></div>
              <div class="c"><svg width="124" height="76" viewBox="790 626 124 76"><path d="M835 676q-1-15-22-15M821 653l-9 8 9 8" /><path d="M868 676q1-15 22-15M884 653l9 8-9 8" stroke="#c9ccd0" /></svg></div>
              <div class="c"></div>
              <div class="c save"><svg width="50" height="36" viewBox="1010 646 50 36"><path d="M1022 679q-9-1-9-10 1-8 9-9 3-12 15-12 13 1 16 14 6 3 6 9-1 8-9 8z" stroke-dasharray="8 5" /></svg><span>Lưu</span><svg width="18" height="10" viewBox="0 0 18 10"><path d="M2 2l7 5.500L16 2" /></svg></div>
              <div class="c"><svg width="76" height="76" viewBox="1174 626 76 76">{@render gear(1212, 664, 1)}</svg></div>
              <div class="c"><svg width="92" height="76" viewBox="1252 626 92 76"><path d="M1279 656q0-3 3-3h9l3-4h10l3 4h9q3 0 3 3v22q0 3-3 3h-34q-3 0-3-3z" /><circle cx="1299" cy="667" r="8.500" /></svg></div>
              <div class="c"><svg width="76" height="76" viewBox="1346 626 76 76"><path d="M1369 658v-9h9M1369 649l9.500 9.500M1390 649h9v9M1399 649l-9.500 9.500M1369 670v9h9M1369 679l9.500-9.500M1390 679h9v-9M1399 679l-9.500-9.500" /></svg></div>
            </div>
            <div class="canvas">
              <div class="pane">
                <div class="prow"><span class="pname">APG, D</span><i class="caret"></i><span class="load"><i></i>Đang tải</span></div>
                <div class="ohlc"><span>O không có sẵn</span><span>H không có sẵn</span><span>L không có sẵn</span><span>C không có sẵn</span><span>không có sẵn (không có sẵn%)</span></div>
              </div>
              <div class="pbot">
                <span class="range">Phạm vi Ngày</span><svg width="18" height="10" viewBox="0 0 18 10"><path d="M1 2l8 5.500L17 2" /></svg>
                <div class="pr"><span>%</span><span class="log">logarit</span><span class="auto">tự động</span>
                  <svg width="30" height="30" viewBox="-15 -15 30 30"><circle r="8" stroke-width="3.200" />{#each [0, 45, 90, 135, 180, 225, 270, 315] as a}<path d="M0-9v-5" stroke-width="3.400" transform="rotate({a})" />{/each}</svg>
                </div>
              </div>
            </div>
          </div>
        </div>

        <div class="depth">
          <div class="dtabs"><span class="on">Độ sâu thị trường</span><span>Lịch sự kiện</span></div>
          <div class="dgrid">
            <div class="dr hd"><div><b>KL mua</b><b>Giá mua</b></div><div><b>Giá bán</b><b>KL bán</b></div></div>
            {#each depth as [q, p, tone, bar]}
              <div class="dr"><div><span class="q">{q}</span><span class="p {tone} {bar}">{p}</span></div><div></div></div>
            {/each}
          </div>
        </div>

        <div class="tape">
          <div class="ttitle"><b>Lịch sử khớp lệnh</b><div class="hist"><svg width="30" height="24" viewBox="0 0 30 24"><path d="M1.500 1v20.500H29" fill="none" stroke="#000" stroke-width="2.200" /><path d="M6 12h4v7H6zM11.500 5h4v14h-4zM17 9h4v10h-4zM22.500 3h4v16h-4z" /></svg></div></div>
          <div class="tb">
            <div class="tr th"><b>Thời gian</b><b>KL</b><b>Giá</b><b>+/-</b></div>
            {#each trades as [t, q]}<div class="tr"><span>{t}</span><span>{q}</span><span>16.05</span><span class="green">1.05</span></div>{/each}
            <i class="thumb"></i>
          </div>
        </div>
      </div>
    </div>
  </main>

  <div class="dock">
    {#each dock as [name, badge, dot]}
      {#if name === 'sep'}<div class="sep"></div>
      {:else}
        <div class="app"><svg width="66" height="66" viewBox="0 0 66 66">{@render dockIcon(name)}</svg>
          {#if badge}<span class="badge">{badge}</span>{/if}
          {#if dot}<i class="dot"></i>{/if}
        </div>
      {/if}
    {/each}
  </div>
</div>

<style>
  :global(body) { margin: 0; background: #0c1020; }
  .defs { position: absolute; }
  * { box-sizing: border-box; }
  svg { display: block; flex: none; overflow: visible; }
  i, em { font-style: normal; }
  .desktop { width: 2880px; height: 1800px; overflow: hidden; position: relative; display: flex; flex-direction: column;
    background: linear-gradient(90deg, #0a0f20 0%, #0b0f1e 40%, #15141d 65%, #2c2024 85%, #33262a 100%); font-family: "Liberation Sans", Arial, sans-serif; }
  .caret { display: inline-block; width: 0; height: 0; border: 6.500px solid transparent; border-top: 8px solid currentColor; border-bottom: 0; }

  .menubar { height: 50px; flex: none; display: flex; align-items: center; padding-left: 40px; color: #f2f3f9; padding-bottom: 3px;
    background: linear-gradient(90deg, #596190, #6b74a2 40%, #8088b3 68%, #8f9ac2); font: 500 26px Inter, sans-serif; letter-spacing: -.5px; text-shadow: 0 3px 6px #2b305066; white-space: nowrap; }
  .menubar .apple { width: 34px; height: 38px; margin-right: 40px; }
  .menubar b { font-weight: 700; margin-right: 41px; letter-spacing: -.1px; }
  .menubar > span:not(.date) { margin-right: 41.500px; }
  .tray { margin-left: auto; margin-right: -224px; font-family: Inter, sans-serif; letter-spacing: 0; }
  .date { width: 211px; margin-right: 37px; display: flex; justify-content: space-between; font-size: 25px; letter-spacing: -.35px; }
  .date i { width: 2px; }

  .browser { position: relative; height: 1628px; flex: none; display: flex; flex-direction: column; border-radius: 20px; overflow: hidden; }
  .tabs { height: 84px; flex: none; background: #5b1730; border-top: 2px solid #a98597; display: flex; align-items: flex-start; padding: 14px 31px 0 42px; font: 500 24px Inter, sans-serif; color: #fff; }
  .lights { display: flex; gap: 16px; padding-top: 15px; width: 148px; }
  .lights i { width: 24px; height: 24px; border-radius: 50%; background: #ed6a5f; }
  .lights i:nth-child(2) { background: #f5bf4f; }
  .lights i:nth-child(3) { background: #61c554; }
  .tab { display: flex; align-items: center; height: 68px; width: 474px; padding: 0 21px 0 20px; }
  .tab .title { margin-left: 16px; flex: 1; white-space: nowrap; overflow: hidden; letter-spacing: -.3px; }
  .tab .x { margin-left: 17px; }
  .tab.active { width: 480px; padding: 0 23px 0 24px; background: #92264e; border-radius: 16px 16px 0 0; position: relative; }
  .tab.active .title { letter-spacing: -.12px; }
  .tab.active::before, .tab.active::after { content: ''; position: absolute; bottom: 0; width: 16px; height: 16px; }
  .tab.active::before { left: -16px; background: radial-gradient(circle at 0 0, transparent 15.500px, #92264e 16px); }
  .tab.active::after { right: -16px; background: radial-gradient(circle at 100% 0, transparent 15.500px, #92264e 16px); }
  .fade { -webkit-mask: linear-gradient(90deg, #000 88%, transparent 102%); mask: linear-gradient(90deg, #000 88%, transparent 102%); }
  .plus { margin: 22px 0 0 32px; }
  .drop { margin: 20px 0 0 auto; }

  .toolbar { height: 74px; flex: none; background: #92264e; border-bottom: 2px solid #6b1e3c; display: flex; align-items: center; }
  .omni { margin-left: 26px; width: 2512px; height: 56px; border-radius: 28px; background: #712142; display: flex; align-items: center; padding: 0 21px 0 28px; }
  .url { margin-left: 22px; font: 400 28px Inter, sans-serif; color: #fff; letter-spacing: -.17px; flex: 1; }
  .url em { color: #c9a6b5; }
  .avatar { margin-left: 22px; width: 44px; height: 44px; border-radius: 50%; background: #e2592f; color: #fff; text-align: center; font: 24px/44px Roboto, sans-serif; }
  .dots { margin-left: 39px; }

  .page { position: relative; height: 1470px; background: #000; }
  .cols { display: grid; grid-template-columns: 115px 94px 92px 93px 135px 94px 122px 92px 122px 92px 121px 93px 101px 85px 94px 120px 94px 121px 93px 122px 92px 92px 94px 136px 120px 114px 116px; }
  .sitehead { position: relative; height: 86px; background: #3b3b3b; border-bottom: 2px solid #2f2f2f; display: flex; align-items: center; padding-left: 100px; color: #e4e4e4; }
  .ghostrow { position: absolute; left: 0; top: 14px; height: 54px; font: 23px/58px "DejaVu Sans Condensed", "DejaVu Sans", sans-serif; color: #463b3b; text-align: right; }
  .ghostrow span { padding-right: 9px; border-right: 1px solid #404040; letter-spacing: -.8px; }
  .ghostrow .lit { background: #3b423b; color: #4a514a; }
  .ghostrow span:nth-child(-n+4) { border: 0; }
  .ghostrow span:nth-child(n+23) { border: 0; }
  .brand { position: relative; font-family: Roboto, sans-serif; font-weight: 500; }
  .search { position: relative; margin-left: 118px; display: flex; width: 266px; height: 50px; border-radius: 6px; overflow: hidden; background: #cbcbcb; font-size: 26px; color: #777; line-height: 50px; padding-left: 10px; justify-content: space-between; }
  .eye { width: 61px; background: #5a5a5a; display: grid; place-items: center; }
  .clock { position: relative; margin-left: 24px; color: #f0a03c; font-size: 24px; width: 1378px; letter-spacing: .1px; }
  .clock b { margin-right: 3px; letter-spacing: -.2px; }
  .feedback { position: relative; width: 166px; height: 40px; background: #575757; border-radius: 5px; display: flex; align-items: center; justify-content: center; gap: 5px; font-size: 24px; color: #d0d0d0; letter-spacing: 0; }
  .flag { position: relative; margin-left: 32px; }
  .cog { position: relative; margin-left: 31px; }
  .base { position: relative; margin-left: 29px; width: 93px; font-size: 26px; padding-top: 6px; letter-spacing: -.3px; }
  .apps { position: relative; }
  .user { margin-left: 53px; }
  .acct { margin: 0 8px 0 14px; font-size: 25px; letter-spacing: 0; }
  .sitenav { height: 56px; background: #444; display: grid; grid-template-columns: 169px 296px 238px 316px 305px 221px; font: bold 22px/56px "Liberation Sans", sans-serif; color: #ececec; letter-spacing: -.2px; }
  .sitenav div { border-right: 1.500px solid #303030; padding-left: 20px; white-space: nowrap; display: flex; align-items: center; gap: 15px; }
  .sitenav .active { color: #f0a03c; padding-left: 40px; }
  .boardArea { height: 1222px; background: #1f1f1f; display: flex; justify-content: space-between; padding-right: 20px; }
  .side { width: 90px; overflow: hidden; border-left: 2px solid #2f2f2f; }
  .side.right { width: 88px; border-left: 0; border-right: 2px solid #303030; }
  .mini { margin-left: -2px; height: 210px; }
  .right .mini { margin-left: 2px; }
  .idx { height: 28px; display: flex; align-items: center; gap: 5px; padding-left: 22px; color: #f0a03c; font-size: 24px; white-space: nowrap; }
  .idx2 { height: 30px; padding-left: 75px; font-size: 24px; color: #ddd; line-height: 32px; }
  .idx3 { position: relative; height: 32px; padding-left: 46px; display: flex; align-items: center; gap: 9px; font-size: 24px; color: #6cf54a; }
  .idx3 em { position: absolute; left: 8px; top: -4px; font: bold 25px/30px "Liberation Sans"; color: #302222; }
  .idx3 svg { position: relative; }
  .ghostcode { height: 36px; padding-left: 8px; font: bold 25px/34px "Liberation Sans"; color: #283228; }
  .entry { margin-left: 18px; height: 50px; background: #ccc; border-radius: 6px 0 0 6px; font-size: 26px; line-height: 50px; padding-left: 10px; color: #777; white-space: nowrap; letter-spacing: -.4px; }
  .rule { margin-top: 10px; height: 4px; background: #dd8f40; margin-left: -2px; }
  .codehead { height: 120px; background: #1c1c1c; border-bottom: 3px solid #333; display: flex; flex-direction: column; justify-content: flex-end; padding: 0 0 7px 8px; }
  .codehead em { font: bold 25px/28px "Liberation Sans"; color: #24391f; height: 30px; }
  .codehead span { font-size: 25px; line-height: 32px; margin: -11px 0 0 12px; height: 36px; color: #fff; white-space: nowrap; }
  .brow { height: 54px; font: bold 25px/55px "Liberation Sans"; padding-left: 8px; background: #000; color: #ea4840; letter-spacing: -.2px; }
  .brow:nth-last-child(2n+1) { background: #1a1a1a; }
  .brow.gain { color: #72f548; } .brow.ref { color: #f6da4d; }
  .brow.sel { background: linear-gradient(#5a5a5a, #444); color: #fff; }
  .brow.r { font: 24px/58px "DejaVu Sans Condensed", "DejaVu Sans", sans-serif; text-align: right; padding: 0 8px 0 0; color: #dcdcdc; letter-spacing: -.6px; }
  .brow.r.sel { background: #464646; }
  .pct { height: 34px; font-size: 26px; color: #e04a3c; padding-left: 4px; display: flex; gap: 3px; line-height: 30px; }
  .pct em { color: #383838; font: 23px/34px "DejaVu Sans Condensed"; letter-spacing: -.5px; }
  .state { height: 92px; font-size: 25px; line-height: 80px; color: #dcdcdc; padding-left: 1px; white-space: nowrap; }
  .collapse { margin-left: 10px; width: 70px; height: 60px; background: #3a3a3a; border-radius: 6px 6px 0 0; display: grid; place-items: center; }
  .right .rule { margin: 0 -2px 0 0; }
  .rh1 { height: 58px; background: #1e1e1e; border-bottom: 2px solid #383838; }
  .rh2 { height: 62px; background: #1a1a1a; border-bottom: 3px solid #333; font-size: 24px; color: #fff; display: flex; line-height: 56px; position: relative; }
  .rh2 i { margin: 20px 0 0 22px; border: 7px solid transparent; border-left: 8px solid #fff; border-right: 0; height: 0; }
  .rh2 em { position: absolute; right: 8px; top: 10px; color: #3c3c3c; font: 23px/56px "DejaVu Sans Condensed"; letter-spacing: -.5px; }

  .bic { height: 46px; background: #000; font: 24px/61px "DejaVu Sans Condensed", "DejaVu Sans", sans-serif; text-align: right; overflow: hidden; letter-spacing: -.65px; }
  .bic span { padding-right: 9px; border-right: 2px solid #2e2e2e; height: 46px; }
  .bic .lit { background: #4a4a4a; }
  .bic .name { text-align: left; padding-left: 10px; font: bold 25px/58px "Liberation Sans"; color: #ea4840; letter-spacing: -.2px; }
  .bic .ref { color: #f6da4d; } .bic .ceil { color: #ee45ee; } .bic .floor { color: #6ce6e6; }
  .bic .plain { color: #dcdcdc; } .bic .down { color: #e5483f; } .bic .gain { color: #72f548; }

  .foot { height: 60px; background: #000; display: grid; align-items: center; grid-template-columns: 245px 562px 593px 535px 193px 197px 146px 183px 154px 1fr; color: #e6e6e6; font-size: 24px; white-space: nowrap; }
  .order { height: 60px; width: 238px; background: linear-gradient(#ea9c42, #d58a35); color: #fff; display: flex; align-items: center; justify-content: center; gap: 5px; letter-spacing: -.1px; }
  .select { height: 50px; border-radius: 5px; background: linear-gradient(#fff, #e8e8e8); border: 2px solid #a5a5a5; color: #111; padding: 0 7px 0 19px; display: flex; align-items: center; justify-content: space-between; }
  .select .caret { color: #777; }
  .conn { grid-column: 4; color: #58c83a; font-size: 22px; }
  .fl { display: flex; align-items: center; gap: 5px; }
  .wide { gap: 7px; }
  .gutter { position: absolute; right: 0; top: 0; width: 20px; height: 1470px; background: #222; padding-top: 38px; }
  .gutter i { display: block; height: 88px; background: #3a3a3a; border-radius: 6px; }

  .tip { position: absolute; left: 6px; top: 1046px; width: 120px; height: 58px; border-radius: 6px; background: #d98a38e8; color: #fff; font: 24px/58px "Noto Sans", sans-serif; padding-left: 36px; }
  .tip::before { content: ''; position: absolute; left: 21px; top: -10px; border: 11px solid transparent; border-top: 0; border-bottom: 10px solid #d98a38e8; }

  .modal { position: absolute; left: 86px; top: 294px; width: 2688px; height: 1224px; background: #fff; border-radius: 6px; box-shadow: 0 0 8px #0008; display: flex; flex-direction: column; }
  .mhead { position: relative; height: 118px; flex: none; display: flex; padding-left: 20px; border-radius: 6px; }
  .mhead h1 { margin: 48px 0 0; width: 1790px; font-size: 36px; line-height: 40px; letter-spacing: 0; color: #000; }
  .ext { margin: 63px 0 0; }
  .link { margin: 61px 0 0; width: 191px; height: 29px; padding-left: 5px; white-space: nowrap; font-size: 24px; line-height: 30px; border-bottom: 2px solid #333; color: #333; letter-spacing: -.05px; }
  .dstock { margin: 55px 0 0 11px; font-family: Roboto, sans-serif; }
  .addbox { margin: 50px 0 0 12px; width: 320px; height: 54px; background: #dcdcdc; }
  .addbtn { margin-top: 50px; width: 150px; height: 54px; background: #e99b3f; color: #fff; font-size: 25px; line-height: 52px; text-align: center; border-radius: 0 4px 4px 0; letter-spacing: -.3px; }
  .close { position: absolute; right: 21px; top: 12px; }
  .stats { height: 164px; flex: none; display: grid; grid-template-columns: 352px 192px 270px 192px 134px 134px 136px 134px 134px 134px 86px 102px 150px 228px 168px 1fr; font-size: 22px; text-align: center; }
  .stat { border-right: 2px solid #dcdcdc; }
  .sh { height: 110px; background: #eee; border: solid #dcdcdc; border-width: 2px 0; display: flex; flex-direction: column; justify-content: center; color: #333; line-height: 40px; }
  .sv { height: 54px; line-height: 51px; border-bottom: 2px solid #dcdcdc; color: #000; }
  .hot { background: #d98d41; } .teal { color: #56b3b3; } .amber { color: #f3b33f; } .pink { color: #e33ee3; } .green { color: #4fae33; }
  .sv small { font-size: 18px; }
  .mbody { height: 910px; display: flex; }

  .chart { width: 1344px; background: #e7ebee; display: flex; font-family: "Noto Sans", sans-serif; color: #4f535f; }
  .chart svg { fill: none; stroke: #4f535f; stroke-width: 2; }
  .tools { position: relative; width: 104px; height: 910px; margin-right: 8px; }
  .grp { background: #fff; border-radius: 0 4px 4px 0; margin-bottom: 2px; }
  .grp svg { width: 104px; height: 72px; }
  .grp .blue { stroke: #4a90d9; }
  .g1 { height: 600px; padding-top: 13px; } .g2 { height: 168px; padding-top: 11px; } .g3 { height: 90px; padding-top: 11px; margin: 0; }
  .more { position: relative; height: 48px; background: #696c78; overflow: hidden; }
  .handle { position: absolute; right: -6px; top: 739px; width: 18px; height: 56px; border: 2px solid #dfe2e5; border-radius: 8px; background: #fff; display: grid; place-items: center; }
  .plot { width: 1224px; }
  .ptop { height: 76px; display: grid; gap: 2px; grid-template-columns: 200px 76px 76px 76px 154px 124px 78px 176px 76px 92px 76px; margin-bottom: 8px; }
  .c { background: #fff; border-radius: 0 0 4px 4px; font-size: 28px; }
  .sym { font-weight: 600; line-height: 78px; padding-left: 20px; color: #444; letter-spacing: -.5px; font-size: 29px; }
  .day { text-align: center; line-height: 76px; font-weight: 500; font-size: 29px; padding-left: 4px; }
  .save { display: flex; align-items: center; padding: 0 12px 0 14px; font-size: 27px; font-weight: 500; letter-spacing: -.5px; }
  .save span { flex: 1; margin: 0 0 0 13px; line-height: 34px; }
  .canvas { background: #fff; border-radius: 8px; height: 818px; display: flex; flex-direction: column; }
  .pane { width: 1204px; height: 704px; border: solid #555; border-width: 0 2px 2px 0; padding: 8px 12px 0 16px; color: #555; }
  .prow { display: flex; align-items: center; height: 46px; }
  .pname { font-size: 33px; line-height: 44px; letter-spacing: -.4px; }
  .prow > .caret { color: #c9cacc; margin-left: 9px; border-width: 8px 8px 0; }
  .load { margin-left: auto; display: flex; align-items: center; font-size: 23px; color: #60b0e2; margin-top: 8px; }
  .load i { width: 12px; height: 12px; border-radius: 50%; background: #60b0e2; margin-right: 6px; }
  .ohlc { font-size: 23px; line-height: 30px; white-space: nowrap; display: flex; gap: 12.500px; letter-spacing: -.48px; }
  .ohlc span:last-child { margin-left: 5px; }
  .pbot { margin-top: 49px; height: 65px; border-top: 2px solid #e7eaed; display: flex; align-items: center; padding-left: 24px; font-size: 25px; letter-spacing: -.35px; line-height: 32px; padding-bottom: 2px; }
  .pbot > svg { margin-left: 10px; }
  .pr { margin-left: auto; width: 380px; height: 48px; border-left: 2px solid #e7eaed; display: flex; align-items: center; padding-left: 27px; }
  .log { margin-left: 34px; } .auto { margin: 0 34px 0 36px; color: #4a90d9; }

  .depth { width: 648px; }
  .dtabs { height: 60px; display: flex; font: bold 24.300px/54px "Liberation Sans"; color: #555; }
  .dtabs span { width: 232px; text-align: center; margin-left: 92px; }
  .dtabs span.on { margin-left: 62px; height: 60px; color: #e99b3f; border-bottom: 6px solid #e99b3f; letter-spacing: -.1px; }
  .dgrid { border-left: 2px solid #dcdcdc; border-right: 2px solid #dcdcdc; height: 550px; }
  .dr { height: 50px; display: grid; grid-template-columns: 1fr 1fr; font-size: 24px; line-height: 52px; }
  .dr:nth-child(odd) { background: #f0f0f0; }
  .dr > div { display: grid; grid-template-columns: 132px 1fr; border-right: 2px solid #dcdcdc; text-align: center; }
  .dr > div:last-child { border: 0; grid-template-columns: 185px 1fr; }
  .dr .p { text-align: right; padding-right: 81px; }
  .hd { line-height: 49px; }
  .full { background: #fce9d8; }
  .thin { background: linear-gradient(90deg, transparent calc(100% - 8px), #ecdccd 0); }

  .tape { width: 673px; }
  .ttitle { position: relative; height: 60px; display: flex; align-items: center; font-size: 24.500px; }
  .ttitle b { width: 670px; text-align: center; letter-spacing: -.1px; }
  .hist { position: absolute; right: 0; top: 10px; width: 44px; height: 40px; border: 2px solid #777; border-radius: 5px; display: grid; place-items: center; }
  .tb { position: relative; width: 653px; }
  .thumb { position: absolute; right: -20px; top: 0; width: 20px; height: 32px; border-radius: 7px; background: #3a3a3a; }
  .tr { height: 50px; display: grid; grid-template-columns: 236px 137px 146px 122px 12px; font-size: 22px; line-height: 50px; text-align: right; letter-spacing: -.1px; }
  .tr:nth-child(odd) { background: #efefef; }
  .tr span:first-child { text-align: left; padding-left: 10px; }
  .th { line-height: 49px; letter-spacing: -.2px; }
  .th b { text-align: center; }
  .th b:nth-child(2) { padding-left: 10px; }
  .th b:nth-child(3) { padding-left: 20px; }
  .th b:nth-child(4) { padding-left: 20px; }

  .dock { position: absolute; left: 69px; top: 1686px; width: 2744px; height: 104px; border-radius: 30px; border: 2px solid #ffffff3a; background: linear-gradient(90deg, #585a6c, #5d606c 55%, #6a6468 80%, #796a6b); display: flex; padding: 14px 0 0 2px; font-family: Inter, sans-serif; }
  .app { position: relative; width: 85.680px; display: flex; justify-content: center; }
  .app svg { filter: drop-shadow(0 2px 2px #0005); }
  .badge { position: absolute; right: 2px; top: -9px; width: 30px; height: 30px; border-radius: 50%; background: #e0493d; color: #fff; text-align: center; font-size: 18px; line-height: 30px; }
  .dot { position: absolute; left: 39px; top: 76px; width: 8px; height: 8px; border-radius: 50%; background: #000; }
  .sep { width: 38.500px; display: flex; justify-content: center; }
  .sep::before { content: ''; width: 2px; height: 76px; margin-top: -2px; background: #3f3b41; }
  .serif { font-family: "Liberation Serif", serif; }
</style>
